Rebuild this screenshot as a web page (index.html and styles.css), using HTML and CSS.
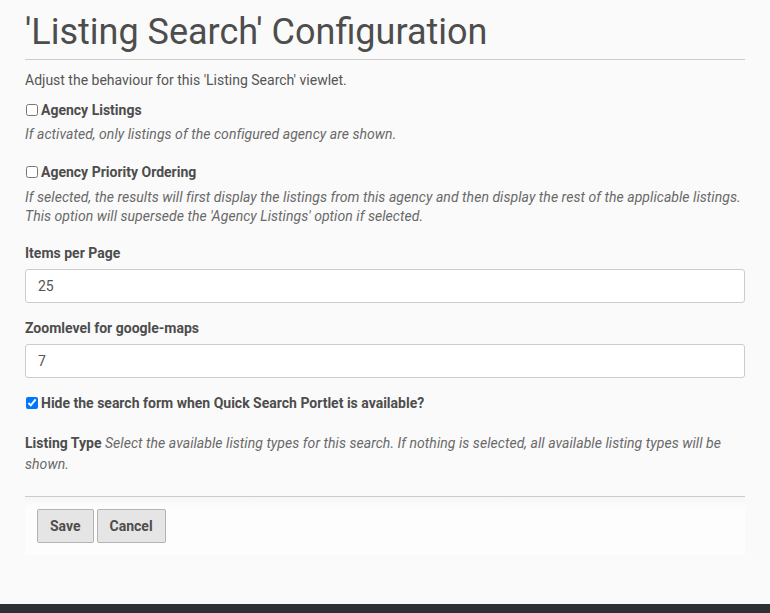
FILE: index.html
```html
<!DOCTYPE html>
<html>
<head>
<meta charset="utf-8">
<link rel="stylesheet" href="styles.css">
</head>
<body>
<main class="content">
  <h1 class="title">'Listing Search' Configuration</h1>
  <p class="desc">Adjust the behaviour for this 'Listing Search' viewlet.</p>
  <form class="form">
    <div class="field f-agency">
      <label class="check-label"><input type="checkbox" class="cb"> <span class="lbl">Agency Listings</span></label>
      <div class="help">If activated, only listings of the configured agency are shown.</div>
    </div>
    <div class="field f-priority">
      <label class="check-label"><input type="checkbox" class="cb"> <span class="lbl">Agency Priority Ordering</span></label>
      <div class="help">If selected, the results will first display the listings from this agency and then display the rest of the applicable listings. This option will supersede the 'Agency Listings' option if selected.</div>
    </div>
    <div class="field f-items">
      <label class="lbl block">Items per Page</label>
      <input type="text" class="text-input" value="25">
    </div>
    <div class="field f-zoom">
      <label class="lbl block">Zoomlevel for google-maps</label>
      <input type="text" class="text-input" value="7">
    </div>
    <div class="field f-hide">
      <label class="check-label"><input type="checkbox" class="cb" checked> <span class="lbl">Hide the search form when Quick Search Portlet is available?</span></label>
    </div>
    <div class="field f-type">
      <span class="lbl">Listing Type</span> <span class="help-inline">Select the available listing types for this search. If nothing is selected, all available listing types will be shown.</span>
    </div>
    <div class="actions">
      <button type="button" class="btn btn-save">Save</button>
      <button type="button" class="btn btn-cancel">Cancel</button>
    </div>
  </form>
</main>
<footer class="footer"></footer>
</body>
</html>
```
FILE: styles.css
```css
html, body { margin: 0; padding: 0; }
body {
  background: #fafafa;
  font-family: Roboto, "Liberation Sans", sans-serif;
  color: #4d4d4d;
  font-size: 14px;
  min-height: 613px;
  display: flex;
  flex-direction: column;
}
.content {
  width: 720px;
  margin: 0 25px;
  flex: 1;
}
.title {
  font-weight: 400;
  font-size: 36px;
  line-height: 40px;
  margin: 12px 0 0;
  padding-bottom: 7px;
  border-bottom: 1px solid #cccccc;
  color: #4d4d4d;
}
.desc {
  margin: 10px 0 0;
  line-height: 20px;
  color: #555;
}
.form { margin: 0; }
.check-label { display: flex; align-items: center; line-height: 20px; }
.cb {
  width: 12px; height: 12px; margin: 0 3px 0 1px;
}
.lbl {
  font-weight: 700;
  color: #4d4d4d;
}
.block { display: block; line-height: 20px; }
.help {
  font-style: italic;
  color: #696969;
  line-height: 19.5px;
  letter-spacing: 0.05px;
}
.f-agency { margin-top: 10px; }
.f-agency .help { margin-top: 5px; }
.f-priority { margin-top: 17px; }
.f-priority .help { margin-top: 6px; }
.f-items { margin-top: 16px; }
.f-zoom { margin-top: 15px; }
.f-hide { margin-top: 15px; }
.text-input {
  display: block;
  box-sizing: border-box;
  width: 100%;
  height: 34px;
  margin: 6px 0 0;
  border: 1px solid #cccccc;
  border-radius: 3px;
  background: #fff;
  padding: 0 12px;
  font-family: Roboto, "Liberation Sans", sans-serif;
  font-size: 14px;
  color: #555;
}
.f-type {
  margin-top: 20px;
  line-height: 21px;
}
.help-inline { font-style: italic; color: #696969; letter-spacing: 0.05px; }
.actions {
  margin-top: 21px;
  border-top: 1px solid #cccccc;
  padding: 12px 12px;
  background: linear-gradient(#f6f6f6, #fdfdfd 10px);
  display: flex;
  gap: 3px;
}
.btn {
  font-family: Roboto, "Liberation Sans", sans-serif;
  font-weight: 700;
  font-size: 14px;
  color: #4d4d4d;
  background: #e5e5e5;
  border: 1px solid #b3b3b3;
  border-radius: 2px;
  height: 34px;
  padding: 0 12px;
}
.footer {
  height: 9px;
  background: #2e3133;
}
```
